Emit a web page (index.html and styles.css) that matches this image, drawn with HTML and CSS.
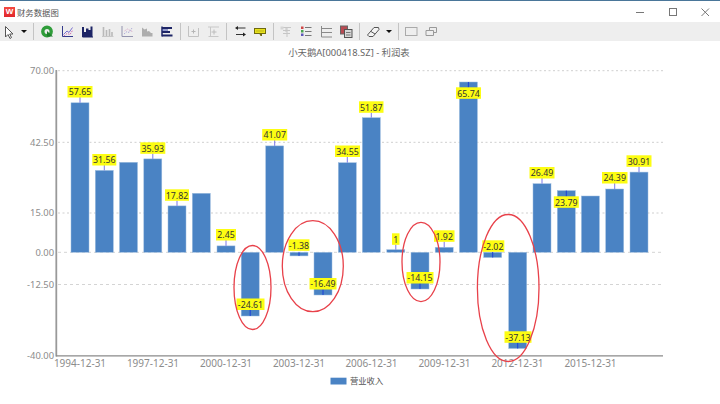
FILE: index.html
```html
<!DOCTYPE html>
<html lang="zh-CN">
<head>
<meta charset="utf-8">
<title>财务数据图</title>
<link rel="stylesheet" href="styles.css">
</head>
<body>
<div class="window">
  <header class="titlebar">
    <div class="logo">W</div>
    <div class="wintitle">财务数据图</div>
    <div class="winctrls">
      <svg class="ctrl" viewBox="0 0 32 18"><path class="ctrl-s" d="M11 9.5H19"/></svg>
      <svg class="ctrl" viewBox="0 0 32 18"><rect class="ctrl-s" x="12.5" y="5.5" width="7" height="7"/></svg>
      <svg class="ctrl" viewBox="0 0 32 18"><path class="ctrl-s" d="M12.5 5.5L20 13M20 5.5L12.5 13"/></svg>
    </div>
  </header>
  <nav class="toolbar">
    <svg class="btn first" viewBox="0 0 18 19"><path d="M5.5 4.5V15L8 12.5L10 16.5L11.5 15.5L9.7 12H13Z" fill="#fff" stroke="#555"/></svg>
    <div class="caret"></div>
    <div class="sep"></div>
    <svg class="btn" viewBox="0 0 20 19"><circle cx="10" cy="9.5" r="4.2" fill="none" stroke="#2f9d3a" stroke-width="3.4"/><path d="M10 9L16 14.5H10Z" fill="#1f7f2c"/></svg>
    <svg class="btn" viewBox="0 0 20 19"><path d="M5.5 4V14.5H16" fill="none" stroke="#343a8c"/><path d="M6.5 12.5L10 9L12 10.5L15.5 5.5" fill="none" stroke="#7a6fd0"/><path d="M7 14L10 11.5L13 12.5L15.5 8.5" fill="none" stroke="#d06bb0" stroke-dasharray="1.5 1"/></svg>
    <svg class="btn" viewBox="0 0 20 19"><path d="M5 5V15H15.5V4.5H13.5V8H11.5V6.5H9V10H7V5Z" fill="#1d2566"/><path d="M5.5 15H16" stroke="#1d2566"/></svg>
    <svg class="btn dim" viewBox="0 0 20 19"><path d="M6.5 5V14M9.5 8V14M12.5 7V14M15 10V14" stroke="#b4b4b4" stroke-width="1.6"/><path d="M5 14.5H16.5" stroke="#c4c4c4"/></svg>
    <svg class="btn dim" viewBox="0 0 20 19"><path d="M5 4V14.5H16" fill="none" stroke="#8a8aa8"/><path d="M7 12L10 9.5L12 10.5L15 6" fill="none" stroke="#a9a4d6" stroke-dasharray="1.5 1"/><path d="M7.5 9L10.5 7L13 8.5L15.5 9.5" fill="none" stroke="#d8a8c8" stroke-dasharray="1.5 1"/></svg>
    <svg class="btn dim" viewBox="0 0 20 19"><path d="M5 14.5V5.5L7.5 7.5L10 6.5V9.5L12 9L14 11H15.5V14.5Z" fill="#a8a8a8"/></svg>
    <svg class="btn" viewBox="0 0 20 19"><path d="M5 4.5V14.5" stroke="#1d2566" stroke-width="1.5"/><path d="M5 5H15V7H5ZM5 9H13V11H5ZM5 12.500H15.500V14.500H5Z" fill="#1d2566"/><path d="M5 7.500H11V8.500H5Z" fill="#3a48a8"/></svg>
    <div class="sep"></div>
    <svg class="btn" viewBox="0 0 20 19"><path d="M5.500 4V14.500H15.500V6" fill="none" stroke="#c2c2c2"/><path d="M8.500 9.500H12.500M10.500 7.500V11.500" stroke="#b5b5b5"/></svg>
    <svg class="btn" viewBox="0 0 20 19"><path d="M5 5H16M5.500 14.500H15.500M7.500 5V14.500" fill="none" stroke="#c8c8c8"/><path d="M8.500 10H13.500M11 7.500V12.500" stroke="#bcbcbc"/></svg>
    <div class="sep"></div>
    <svg class="btn" viewBox="0 0 20 19"><path d="M7 6H15.500M6 12.500H13" stroke="#333"/><path d="M8 4V8L5 6ZM13 10.500V14.500L16 12.500Z" fill="#222"/></svg>
    <svg class="btn" viewBox="0 0 20 19"><rect x="4.500" y="6.500" width="11" height="5" fill="#e8e21c" stroke="#6f6a10"/><path d="M9.500 12H12V14H10.500Z" fill="#6f6a10"/><path d="M6.500 9H13.500" stroke="#8c8618" stroke-dasharray="1 1"/></svg>
    <div class="sep"></div>
    <svg class="btn" viewBox="0 0 20 19"><path d="M5 5.500H15M11 5V15M7 8.500H14M7 11.500H14M10 5V10" fill="none" stroke="#c6c6c6"/><rect x="4.500" y="4.500" width="3" height="3" fill="#d5d5d5"/></svg>
    <svg class="btn" viewBox="0 0 20 19"><path d="M9 5.500H15.500M9 9.500H15.500M9 13.500H15.500" stroke="#777"/><rect x="5" y="4.500" width="2.500" height="2.500" fill="#cf4646"/><rect x="5" y="8" width="2.500" height="2.500" fill="#49a24f"/><rect x="5" y="11.500" width="2.500" height="2.500" fill="#5e57b8"/></svg>
    <svg class="btn" viewBox="0 0 20 19"><path d="M5.500 4V15H16M5.500 6.500H16M5.500 10.500H16" fill="none" stroke="#8a8a8a"/></svg>
    <svg class="btn" viewBox="0 0 20 19"><rect x="4.500" y="4" width="7" height="8" fill="#b84a52" stroke="#666"/><rect x="8.500" y="7.500" width="7.500" height="8" fill="#d8d8d8" stroke="#555"/><path d="M10 10.500H14.500M10 13H14.500" stroke="#777"/></svg>
    <div class="sep"></div>
    <svg class="btn" viewBox="0 0 20 19"><path d="M4.500 13L11 5.500H15.500L16 7.500L10 14.500H6Z" fill="#f4f4f4" stroke="#555"/><path d="M8 9.500L12 12" stroke="#555"/></svg>
    <div class="caret"></div>
    <div class="sep"></div>
    <svg class="btn" viewBox="0 0 20 19"><rect x="4.500" y="5.500" width="11.500" height="8" fill="none" stroke="#aaa"/></svg>
    <svg class="btn" viewBox="0 0 20 19"><path d="M8.500 8V5.500H15.500V10.500H13M5 8.500H12.500V13.500H5Z" fill="none" stroke="#999"/></svg>
  </nav>
  <main class="chart-area">
    <svg class="chart" viewBox="0 41 720 363">
      <text class="ctitle" x="349" y="56">小天鹅A[000418.SZ] - 利润表</text>

      <g class="grid">
        <path d="M58 70.700H663"/><path d="M58 142.300H663"/><path d="M58 213H663"/>
        <path class="fine" d="M58 252.300H663"/><path class="fine" d="M58 284.500H663"/>
      </g>

      <g class="ylabels">
        <text x="54" y="74">70.00</text><text x="54" y="145.600">42.50</text><text x="54" y="216.300">15.00</text>
        <text x="54" y="255.600">0.00</text><text x="54" y="287.800">-12.50</text><text x="54" y="359">-40.00</text>
      </g>

      <g class="bars">
        <rect x="71" y="102.800" width="18" height="149.500"/>
        <rect x="95.300" y="170.400" width="18" height="81.900"/>
        <rect x="119.500" y="162.300" width="18" height="90"/>
        <rect x="143.800" y="158.900" width="18" height="93.400"/>
        <rect x="168" y="205.900" width="18" height="46.400"/>
        <rect x="192.300" y="193.300" width="18" height="59"/>
        <rect x="217" y="245.900" width="18" height="6.400"/>
        <rect x="241.200" y="252.300" width="18" height="63.700"/>
        <rect x="265.700" y="145.900" width="18" height="106.400"/>
        <rect x="290" y="252.300" width="18" height="3.600"/>
        <rect x="314" y="252.300" width="18" height="42.700"/>
        <rect x="338.300" y="162.700" width="18" height="89.600"/>
        <rect x="362.300" y="117.700" width="18" height="134.600"/>
        <rect x="386.800" y="249.700" width="18" height="2.600"/>
        <rect x="411" y="252.300" width="18" height="36.700"/>
        <rect x="435.200" y="247.300" width="18" height="5"/>
        <rect x="459.400" y="82" width="18" height="170.300"/>
        <rect x="483.700" y="252.300" width="18" height="5.200"/>
        <rect x="508.700" y="252.300" width="18" height="96.200"/>
        <rect x="533" y="183.700" width="18" height="68.600"/>
        <rect x="557.300" y="190.600" width="18" height="61.700"/>
        <rect x="581.400" y="196" width="18" height="56.300"/>
        <rect x="605.700" y="189" width="18" height="63.300"/>
        <rect x="630" y="172.100" width="18" height="80.200"/>
      </g>

      <g class="stems">
        <path d="M80 97V102.800M104.300 165V170.400M152.800 153.500V158.900M177 200.500V205.900M226 240V245.900M274.700 140V145.900M347.300 156.700V162.700M371.300 112.500V117.700M395.800 244.500V249.700M444.200 241.500V247.300M542 178V183.700M614.700 183V189M639 166.500V172.100"/>
        <path class="dark" d="M250.200 310V316M299 252.300V255.900M323 289V295M420 283V289M468.400 82V88M492.700 252V257.500M517.700 342.500V348.500M566.300 190.600V197"/>
      </g>

      <g class="tags">
        <rect x="67.500" y="86" width="25" height="11.500"/>
        <rect x="92.300" y="154" width="24" height="11.500"/>
        <rect x="140.300" y="142.300" width="25" height="11.500"/>
        <rect x="165" y="189.300" width="24" height="11.500"/>
        <rect x="216" y="229" width="20" height="11.500"/>
        <rect x="236.500" y="298.500" width="28" height="11.500"/>
        <rect x="262.200" y="129" width="25" height="11.500"/>
        <rect x="288.500" y="239.300" width="21" height="11.500"/>
        <rect x="309.500" y="278" width="27" height="11.500"/>
        <rect x="335" y="145.500" width="25" height="11.500"/>
        <rect x="359" y="101.300" width="24.500" height="11.500"/>
        <rect x="392" y="233.300" width="7.500" height="11.500"/>
        <rect x="406.500" y="272" width="27" height="11.500"/>
        <rect x="434" y="230.300" width="20.500" height="11.500"/>
        <rect x="456" y="87.300" width="25" height="11.500"/>
        <rect x="482.300" y="240.300" width="22" height="11.500"/>
        <rect x="504.500" y="331.300" width="27" height="11.500"/>
        <rect x="529.500" y="167" width="25" height="11.500"/>
        <rect x="553.800" y="196.300" width="25" height="11.500"/>
        <rect x="602" y="172" width="25.500" height="11.500"/>
        <rect x="626.500" y="155.300" width="25" height="11.500"/>
      </g>
      <g class="tagtext">
        <text x="80" y="95.200">57.65</text><text x="104.300" y="163.200">31.56</text><text x="152.800" y="151.500">35.93</text>
        <text x="177" y="198.500">17.82</text><text x="226" y="238.200">2.45</text><text x="250.500" y="307.700">-24.61</text>
        <text x="274.700" y="138.200">41.07</text><text x="299" y="248.500">-1.38</text><text x="323" y="287.200">-16.49</text>
        <text x="347.500" y="154.700">34.55</text><text x="371.300" y="110.500">51.87</text><text x="395.800" y="242.500">1</text>
        <text x="420" y="281.200">-14.15</text><text x="444.200" y="239.500">1.92</text><text x="468.500" y="96.500">65.74</text>
        <text x="493.300" y="249.500">-2.02</text><text x="518" y="340.500">-37.13</text><text x="542" y="176.200">26.49</text>
        <text x="566.300" y="205.500">23.79</text><text x="614.700" y="181.200">24.39</text><text x="639" y="164.500">30.91</text>
      </g>

      <g class="axes">
        <path class="yaxis" d="M56.300 70V356.500"/>
        <path d="M56 355.800H663"/>
      </g>

      <g class="xlabels">
        <text x="80" y="367">1994-12-31</text><text x="153" y="367">1997-12-31</text><text x="226" y="367">2000-12-31</text>
        <text x="299" y="367">2003-12-31</text><text x="371.500" y="367">2006-12-31</text><text x="444.500" y="367">2009-12-31</text>
        <text x="517.500" y="367">2012-12-31</text><text x="590.500" y="367">2015-12-31</text>
      </g>

      <g class="marks">
        <ellipse cx="252.500" cy="287.500" rx="18.500" ry="42"/>
        <ellipse cx="312.800" cy="266.200" rx="30.500" ry="45.500"/>
        <ellipse cx="421" cy="262" rx="19" ry="39.700"/>
        <ellipse cx="508.200" cy="288" rx="30.800" ry="73.500"/>
      </g>

      <rect class="swatch" x="330.500" y="377.700" width="16" height="6.800"/>
      <text class="legend" x="350" y="383.500">营业收入</text>
    </svg>
  </main>
</div>
</body>
</html>
```
FILE: styles.css
```css
html, body {
  margin: 0;
  padding: 0;
  background: #fff;
}

.window {
  width: 720px;
  height: 404px;
  display: flex;
  flex-direction: column;
  overflow: hidden;
  font-family: "Noto Sans", "Noto Sans CJK SC", sans-serif;
  border-top: 1px solid #4a7699;
  box-sizing: border-box;
}

.titlebar {
  height: 21px;
  display: flex;
  align-items: center;
  padding-left: 4px;
  flex: none;
}

.logo {
  width: 11px;
  height: 10px;
  background: linear-gradient(#f4493f, #e0262c);
  color: #fff;
  font: bold 8px/10px "Liberation Sans", sans-serif;
  text-align: center;
  margin-right: 2px;
}

.wintitle {
  font-size: 8.4px;
  color: #555;
}

.winctrls {
  margin-left: auto;
  display: flex;
  margin-right: -1px;
}

.ctrl {
  width: 32px;
  height: 18px;
  display: block;
}

.ctrl-s {
  fill: none;
  stroke: #777;
  stroke-width: 1;
}

.toolbar {
  height: 19px;
  flex: none;
  background: #eee;
  display: flex;
  align-items: center;
}

.btn {
  width: 20px;
  height: 19px;
  flex: none;
  display: block;
}

.btn.first {
  width: 18px;
}

.dim {
  opacity: 0.9;
}

.caret {
  width: 12px;
  height: 19px;
  flex: none;
  position: relative;
}

.caret::after {
  content: "";
  position: absolute;
  left: 3px;
  top: 8px;
  border-left: 3px solid transparent;
  border-right: 3px solid transparent;
  border-top: 3px solid #111;
}

.sep {
  width: 1px;
  height: 17px;
  background: #c4c4c4;
  margin: 0 2.5px 0 3px;
  flex: none;
}

.chart-area {
  flex: 1;
  min-height: 0;
}

.chart {
  display: block;
  width: 720px;
  height: 363px;
}

.chart text {
  font-family: "Noto Sans", "Noto Sans CJK SC", sans-serif;
}

.ctitle {
  font-size: 9.4px;
  fill: #666;
  text-anchor: middle;
}

.grid path {
  stroke: #cfcfcf;
  stroke-width: 1;
  stroke-dasharray: 2 2.500;
  fill: none;
}

.grid path.fine {
  stroke-dasharray: 3 3;
  stroke: #d4d4d4;
}

.ylabels text {
  font-size: 9.400px;
  fill: #8c8c8c;
  text-anchor: end;
}

.xlabels text {
  font-size: 10px;
  fill: #8c8c8c;
  text-anchor: middle;
}

.bars rect {
  fill: #4a83c4;
  stroke: #9dbde0;
  stroke-width: 0.5;
}

.stems path {
  stroke: #7a78e8;
  stroke-width: 1;
  fill: none;
}

.stems path.dark {
  stroke: #1b3fd8;
}

.tags rect {
  fill: #fdfd12;
}

.tagtext text {
  font-size: 8.800px;
  fill: #333;
  text-anchor: middle;
}

.axes path {
  stroke: #8a8a8a;
  stroke-width: 1.200;
  fill: none;
}

.axes path.yaxis {
  stroke: #999;
  stroke-width: 1.800;
}

.marks ellipse {
  fill: none;
  stroke: #e8414a;
  stroke-width: 1.300;
}

.swatch {
  fill: #4a83c4;
}

.legend {
  font-size: 8.300px;
  fill: #555;
}
```
